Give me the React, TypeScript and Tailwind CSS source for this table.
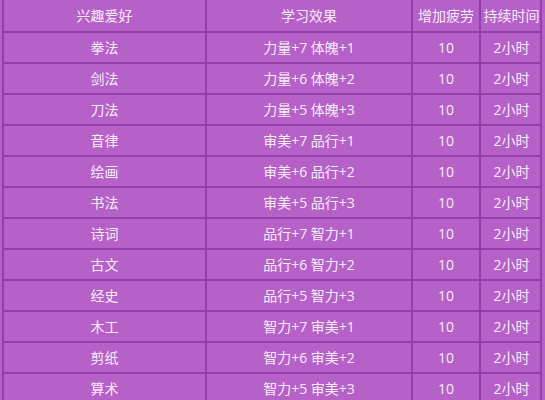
import React from "react";

const rows: [string, string, string, string][] = [
  ["拳法", "力量+7 体魄+1", "10", "2小时"],
  ["剑法", "力量+6 体魄+2", "10", "2小时"],
  ["刀法", "力量+5 体魄+3", "10", "2小时"],
  ["音律", "审美+7 品行+1", "10", "2小时"],
  ["绘画", "审美+6 品行+2", "10", "2小时"],
  ["书法", "审美+5 品行+3", "10", "2小时"],
  ["诗词", "品行+7 智力+1", "10", "2小时"],
  ["古文", "品行+6 智力+2", "10", "2小时"],
  ["经史", "品行+5 智力+3", "10", "2小时"],
  ["木工", "智力+7 审美+1", "10", "2小时"],
  ["剪纸", "智力+6 审美+2", "10", "2小时"],
  ["算术", "智力+5 审美+3", "10", "2小时"],
];

function Row({ cells, h }: { cells: string[]; h: string }) {
  return (
    <div className={`grid grid-cols-[203px_206px_68px_61px] ${h} border-b-2 border-[#9240a7]`}>
      {cells.map((c, i) => (
        <div
          key={i}
          className={`flex items-center justify-center text-[14px] text-[#f8ebf8] ${i < 3 ? "border-r-2 border-[#9240a7]" : ""}`}
        >
          {c}
        </div>
      ))}
    </div>
  );
}

export default function App() {
  return (
    <div
      className="w-[545px] h-[400px] overflow-hidden bg-[#b561c8] pl-[2px]"
      style={{ fontFamily: '"Open Sans", "Noto Sans CJK SC", sans-serif' }}
    >
      <div className="w-[540px] border-l-2 border-r-2 border-[#9240a7]">
        <Row cells={["兴趣爱好", "学习效果", "增加疲劳", "持续时间"]} h="h-[33px]" />
        {rows.map((r, i) => (
          <Row key={i} cells={r} h="h-[31px]" />
        ))}
      </div>
    </div>
  );
}
